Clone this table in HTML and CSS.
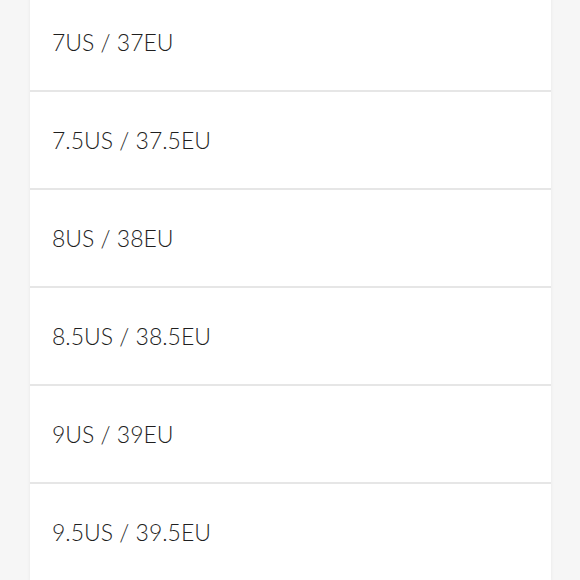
FILE: index.html
```html
<!DOCTYPE html>
<html>
<head>
<meta charset="utf-8">
<link rel="stylesheet" href="styles.css">
</head>
<body>
<div class="page">
  <ul class="sizes">
    <li class="size">7US / 37EU</li>
    <li class="size">7.5US / 37.5EU</li>
    <li class="size">8US / 38EU</li>
    <li class="size">8.5US / 38.5EU</li>
    <li class="size">9US / 39EU</li>
    <li class="size">9.5US / 39.5EU</li>
  </ul>
</div>
</body>
</html>
```
FILE: styles.css
```css
html, body {
  margin: 0;
  padding: 0;
  background: #f6f6f6;
  overflow: hidden;
}
.page {
  width: 580px;
  height: 580px;
  overflow: hidden;
  padding: 0 29px 0 30px;
  box-sizing: border-box;
}
.sizes {
  list-style: none;
  margin: -6px 0 0 0;
  padding: 0;
  background: #fff;
  box-shadow: 0 0 4px rgba(0,0,0,0.06);
}
.size {
  box-sizing: border-box;
  height: 98px;
  display: flex;
  align-items: center;
  padding: 0 0 0 22px;
  border-bottom: 2px solid #e6e6e6;
  font-family: "Lato", sans-serif;
  font-weight: 300;
  font-size: 23px;
  color: #1f1f1f;
}
```
